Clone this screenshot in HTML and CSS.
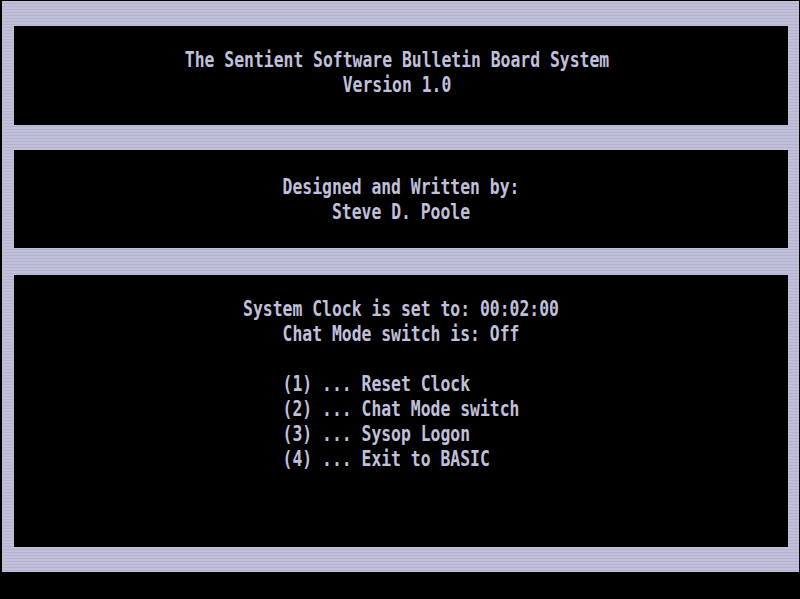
FILE: index.html
```html
<!DOCTYPE html>
<html>
<head>
<meta charset="utf-8">
<link rel="stylesheet" href="styles.css">
</head>
<body>
<div class="frame">
  <div class="box box-title">
    <div class="line">The Sentient Software Bulletin Board System</div>
    <div class="line">Version 1.0</div>
  </div>
  <div class="box box-credit">
    <div class="line">Designed and Written by:</div>
    <div class="line">Steve D. Poole</div>
  </div>
  <div class="box box-menu">
    <div class="line">System Clock is set to: 00:02:00</div>
    <div class="line">Chat Mode switch is: Off</div>
    <div class="line"> </div>
    <div class="line">(1) ... Reset Clock     </div>
    <div class="line">(2) ... Chat Mode switch</div>
    <div class="line">(3) ... Sysop Logon     </div>
    <div class="line">(4) ... Exit to BASIC   </div>
  </div>
</div>
</body>
</html>
```
FILE: styles.css
```css
html, body {
  margin: 0;
  padding: 0;
  background: #000;
}
body {
  width: 800px;
  height: 599px;
  overflow: hidden;
}
.frame {
  box-sizing: border-box;
  margin: 1px 1px 0 2px;
  height: 571px;
  background-color: #bcbcd8;
  background-image: repeating-linear-gradient(to bottom, rgba(255,255,255,0.06) 0 2px, rgba(0,0,0,0.05) 2px 3px);
  padding: 25px 11px 25px 12px;
  display: flex;
  flex-direction: column;
}
.box {
  box-sizing: border-box;
  background: #000;
  color: #c0c0dc;
  font-family: "DejaVu Sans Mono", "Liberation Mono", monospace;
  font-weight: bold;
  font-size: 22px;
  line-height: 25px;
  text-align: center;
}
.line {
  height: 25px;
  white-space: pre;
  transform: scaleX(0.745);
}
.box-title {
  height: 99px;
  padding-top: 21px;
  padding-right: 8px;
}
.box-credit {
  height: 98px;
  margin-top: 25px;
  padding-top: 24px;
}
.box-menu {
  height: 272px;
  margin-top: 27px;
  padding-top: 21px;
}
```
